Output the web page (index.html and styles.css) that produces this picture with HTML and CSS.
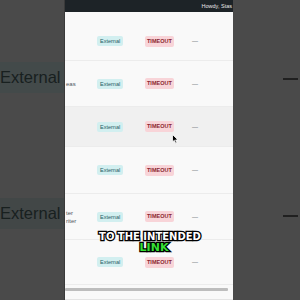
FILE: index.html
```html
<!DOCTYPE html>
<html>
<head>
<meta charset="utf-8">
<link rel="stylesheet" href="styles.css">
</head>
<body>
<div class="frame">
  <div class="side side-left">
    <div class="band band-1"><span class="big">External</span></div>
    <div class="band band-2"><span class="big">External</span></div>
  </div>
  <div class="center">
    <div class="adminbar"><span class="howdy">Howdy, Stas</span></div>
    <div class="row row-1">
      <div class="c-text"></div>
      <div class="c-type"><span class="badge ext">External</span></div>
      <div class="c-status"><span class="badge tmo">TIMEOUT</span></div>
      <div class="c-dash">—</div>
    </div>
    <div class="row row-2">
      <div class="c-text">eas</div>
      <div class="c-type"><span class="badge ext">External</span></div>
      <div class="c-status"><span class="badge tmo">TIMEOUT</span></div>
      <div class="c-dash">—</div>
    </div>
    <div class="row row-3 hover">
      <div class="c-text"></div>
      <div class="c-type"><span class="badge ext">External</span></div>
      <div class="c-status"><span class="badge tmo">TIMEOUT</span></div>
      <div class="c-dash">—</div>
    </div>
    <div class="row row-4">
      <div class="c-text"></div>
      <div class="c-type"><span class="badge ext">External</span></div>
      <div class="c-status"><span class="badge tmo">TIMEOUT</span></div>
      <div class="c-dash">—</div>
    </div>
    <div class="row row-5">
      <div class="c-text">ter<br>riter</div>
      <div class="c-type"><span class="badge ext">External</span></div>
      <div class="c-status"><span class="badge tmo">TIMEOUT</span></div>
      <div class="c-dash">—</div>
    </div>
    <div class="row row-6">
      <div class="c-text"></div>
      <div class="c-type"><span class="badge ext">External</span></div>
      <div class="c-status"><span class="badge tmo">TIMEOUT</span></div>
      <div class="c-dash">—</div>
    </div>
    <div class="scrollzone"><div class="scrollbar"></div></div>
  </div>
  <div class="side side-right">
    <div class="rdash rdash-1"></div>
    <div class="rdash rdash-2"></div>
  </div>
  <div class="caption">
    <div class="cap-line white">TO THE INTENDED</div>
    <div class="cap-line green">LINK</div>
  </div>
  <svg class="cursor" width="7" height="10" viewBox="0 0 7 10">
    <path d="M0.5 0.5 L0.5 8 L2.3 6.3 L3.6 9.2 L4.8 8.7 L3.6 5.9 L6 5.9 Z" fill="#000" stroke="#fff" stroke-width="0.8"/>
  </svg>
</div>
</body>
</html>
```

FILE: styles.css
```css
html, body {
  margin: 0;
  padding: 0;
  width: 300px;
  height: 300px;
  overflow: hidden;
  background: #4a4a4a;
}

.frame {
  position: relative;
  display: flex;
  width: 300px;
  height: 300px;
  font-family: "Liberation Sans", Arial, sans-serif;
}

.side {
  background: #4a4a4a;
  display: flex;
  flex-direction: column;
  overflow: hidden;
}

.side-left {
  width: 65px;
  flex: none;
  border-right: 1px solid #3a3a3a;
  box-sizing: border-box;
}

.band {
  height: 31px;
  display: flex;
  align-items: center;
  background: #434a4a;
}

.band-1 { margin-top: 62px; }
.band-2 { margin-top: 105px; background: #424747; }

.big {
  font-size: 16.5px;
  color: #18201f;
  white-space: nowrap;
}

.center {
  width: 168px;
  flex: none;
  background: #f9f9f9;
  display: flex;
  flex-direction: column;
  overflow: hidden;
}

.adminbar {
  height: 12px;
  background: #1d2327;
  display: flex;
  align-items: center;
  justify-content: flex-end;
  overflow: hidden;
}

.howdy {
  font-size: 5.5px;
  color: #e6e6e6;
  white-space: nowrap;
  margin-right: 1px;
}

.row {
  display: grid;
  grid-template-columns: 32px 48px 47px 1fr;
  align-items: center;
  border-bottom: 1px solid #ececec;
  box-sizing: border-box;
}

.row > div {
  display: flex;
  align-items: center;
}

.row-1 { height: 49px; padding-top: 10px; }
.row-2 { height: 46px; }
.row-3 { height: 40px; }
.row-4 { height: 47px; }
.row-5 { height: 46px; }
.row-6 { height: 45px; }

.hover { background: #f0f0f0; }

.c-text {
  font-size: 6px;
  line-height: 8px;
  color: #50575e;
  padding-left: 1px;
  white-space: nowrap;
}

.badge {
  display: block;
  font-size: 5.5px;
  line-height: 10px;
  height: 10px;
  border-radius: 2px;
  white-space: nowrap;
}

.ext {
  background: #d2eff0;
  color: #1f5c60;
  padding: 0 3px;
}

.tmo {
  background: #f8d4d8;
  color: #8b2530;
  font-weight: bold;
  padding: 0 2px;
  height: 11px;
  line-height: 11px;
}

.c-dash {
  font-size: 6px;
  line-height: 6px;
  color: #50575e;
}

.scrollzone {
  flex: 1;
  padding-top: 3px;
  border-bottom: 1px solid #e4e4e4;
  box-sizing: border-box;
}

.scrollbar {
  width: 163px;
  height: 3px;
  background: #bdbdbd;
  border-radius: 1px;
}

.side-right {
  flex: 1;
  align-items: flex-end;
}

.rdash {
  width: 15px;
  height: 2px;
  background: #202020;
  margin-right: 2px;
}

.rdash-1 { margin-top: 78px; }
.rdash-2 { margin-top: 135px; }

.caption {
  position: absolute;
  left: 65px;
  width: 168px;
  top: 231px;
  text-align: center;
  font-family: "DejaVu Sans", sans-serif;
  font-weight: bold;
  font-size: 10px;
  line-height: 11px;
  -webkit-text-stroke: 2.6px #000;
  paint-order: stroke fill;
}

.cap-line.white { color: #ffffff; margin-left: 2px; }
.cap-line.green { color: #35e035; margin-left: 10px; font-size: 11px; }

.cursor {
  position: absolute;
  left: 172px;
  top: 134px;
}
```
